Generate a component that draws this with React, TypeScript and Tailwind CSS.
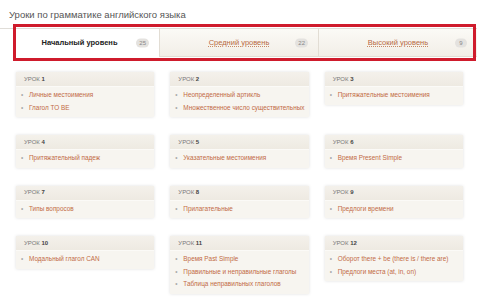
const lessons: string[][] = [
  ["Личные местоимения", "Глагол TO BE"],
  ["Неопределенный артикль", "Множественное число существительных"],
  ["Притяжательные местоимения"],
  ["Притяжательный падеж"],
  ["Указательные местоимения"],
  ["Время Present Simple"],
  ["Типы вопросов"],
  ["Прилагательные"],
  ["Предлоги времени"],
  ["Модальный глагол CAN"],
  ["Время Past Simple", "Правильные и неправильные глаголы", "Таблица неправильных глаголов"],
  ["Оборот there + be (there is / there are)", "Предлоги места (at, in, on)"],
];

const tabs = [
  { label: "Начальный уровень", count: 25, active: true },
  { label: "Средний уровень", count: 22, active: false },
  { label: "Высокий уровень", count: 9, active: false },
];

function Tab({ label, count, active }: { label: string; count: number; active: boolean }) {
  return (
    <div
      className={
        active
          ? "w-[159px] relative flex items-center justify-center bg-white"
          : "w-[159px] relative flex items-center justify-center bg-gradient-to-b from-[#fbfaf6] to-[#f2eee7] border-l border-b border-[#e2ddd4]"
      }
    >
      <span
        className={
          active
            ? "text-[7.5px] font-bold text-[#222]"
            : "text-[7.5px] text-[#b86a43] underline decoration-dotted decoration-[#c98a66] underline-offset-[1px]"
        }
      >
        {label}
      </span>
      <span className="absolute right-[10px] top-1/2 -translate-y-1/2 h-[9px] px-[3px] min-w-[12px] rounded-full bg-[#e4e2df] text-[6px] leading-[9px] text-center text-[#888]">
        {count}
      </span>
    </div>
  );
}

function Card({ n, items }: { n: number; items: string[] }) {
  return (
    <div className="bg-[#f7f5f0] shadow-[0_0_3px_rgba(0,0,0,0.13)] self-start">
      <div className="h-[15px] flex items-center pl-[8px] bg-gradient-to-b from-[#f4f1eb] to-[#eeeae2] border-b border-[#fbfaf7] text-[6px] text-[#777]">
        УРОК&nbsp;<span className="font-bold text-[#444]">{n}</span>
      </div>
      <ul className="pt-[2px] pb-[3px]">
        {items.map((it) => (
          <li
            key={it}
            className="flex items-center h-[12.5px] pl-[5px] text-[6.4px] whitespace-nowrap text-[#c26b45]"
          >
            <span className="w-[8px] text-[#aaa]">•</span>
            {it}
          </li>
        ))}
      </ul>
    </div>
  );
}

export default function App() {
  return (
    <div
      className="relative w-[480px] h-[298px] overflow-hidden bg-white"
      style={{ fontFamily: "Tahoma, 'Liberation Sans', Arial, sans-serif" }}
    >
      <div className="h-[28px] pl-[9px] pt-[9px] text-[9.5px] leading-[12px] text-[#555]">
        Уроки по грамматике английского языка
      </div>
      <div className="flex h-[29px] w-[477px] border-t border-[#e0ddd8]">
        {tabs.map((t) => (
          <Tab key={t.label} {...t} />
        ))}
      </div>
      <div className="mt-[15px] ml-[16px] w-[447px] grid grid-cols-3 gap-x-[16px] gap-y-[18px] items-start">
        {lessons.map((items, i) => (
          <Card key={i} n={i + 1} items={items} />
        ))}
      </div>
      <div className="absolute left-[13px] top-[24px] w-[463px] h-[37px] border-[3px] border-[#cf1b2c]" />
    </div>
  );
}
